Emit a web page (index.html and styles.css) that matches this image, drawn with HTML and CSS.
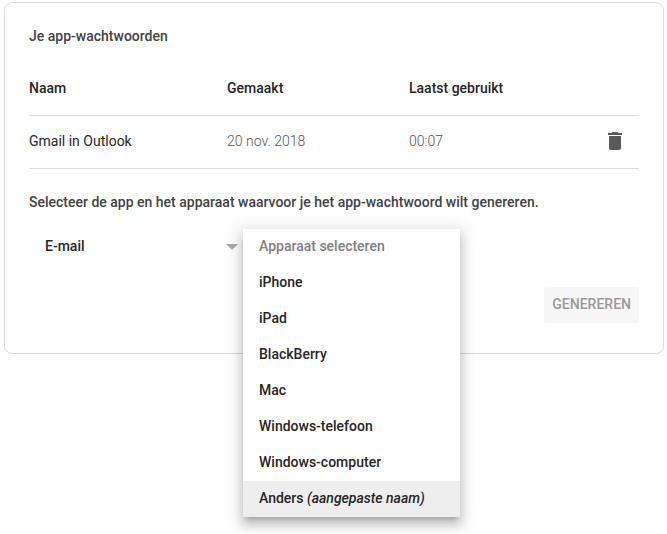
FILE: index.html
```html
<!DOCTYPE html>
<html lang="nl">
<head>
    <meta charset="UTF-8">
    <meta name="viewport" content="width=device-width, initial-scale=1.0">
    <title>App-wachtwoorden</title>
    <link rel="stylesheet" href="styles.css">
</head>
<body>
    <main class="card">
        <h1 class="card-title">Je app-wachtwoorden</h1>

        <table class="passwords">
            <thead>
                <tr>
                    <th class="col-name" scope="col">Naam</th>
                    <th class="col-created" scope="col">Gemaakt</th>
                    <th scope="col">Laatst gebruikt</th>
                    <td class="col-action"></td>
                </tr>
            </thead>
            <tbody>
                <tr>
                    <td>Gmail in Outlook</td>
                    <td class="muted">20 nov. 2018</td>
                    <td class="muted">00:07</td>
                    <td class="col-action">
                        <button class="delete" type="button" aria-label="Verwijderen">
                            <svg width="24" height="24" viewBox="0 0 24 24" fill="#5a5a5a" aria-hidden="true">
                                <path d="M6 19c0 1.100.900 2 2 2h8c1.100 0 2-.900 2-2V7H6v12zM19 4h-3.500l-1-1h-5l-1 1H5v2h14V4z"/>
                            </svg>
                        </button>
                    </td>
                </tr>
            </tbody>
        </table>

        <form class="generate">
            <p class="hint">Selecteer de app en het apparaat waarvoor je het app-wachtwoord wilt genereren.</p>
            <div class="pickers">
                <div class="app-picker">
                    <select class="app-select" aria-label="App selecteren">
                        <option>E-mail</option>
                    </select>
                    <svg class="arrow" width="12" height="6" viewBox="0 0 12 6" fill="#aaa" aria-hidden="true">
                        <path d="M0 0h12L6 6z"/>
                    </svg>
                </div>
                <div class="device-picker">
                    <div class="menu" role="listbox" aria-label="Apparaat selecteren">
                        <button class="menu-item placeholder" type="button" role="option">Apparaat selecteren</button>
                        <button class="menu-item" type="button" role="option">iPhone</button>
                        <button class="menu-item" type="button" role="option">iPad</button>
                        <button class="menu-item" type="button" role="option">BlackBerry</button>
                        <button class="menu-item" type="button" role="option">Mac</button>
                        <button class="menu-item" type="button" role="option">Windows-telefoon</button>
                        <button class="menu-item" type="button" role="option">Windows-computer</button>
                        <button class="menu-item active" type="button" role="option" aria-selected="true">Anders <em>(aangepaste naam)</em></button>
                    </div>
                </div>
            </div>
            <button class="submit" type="submit" disabled>GENEREREN</button>
        </form>
    </main>
</body>
</html>
```
FILE: styles.css
```css
* {
    box-sizing: border-box;
}

body {
    min-height: 100vh;
    margin: 0;
    padding: 2px 3px 0 4px;
    background: #fff;
    color: #262626;
    font-family: Roboto, "Liberation Sans", sans-serif;
    font-size: 14px;
    line-height: 20px;
}

button,
select {
    font: inherit;
    color: inherit;
    background: none;
    border: none;
    padding: 0;
}

.card {
    padding: 23px 24px 30px;
    border: 1px solid #dadce0;
    border-radius: 8px;
}

.card-title {
    margin: 0 0 16px;
    font-size: 14px;
    font-weight: 500;
    color: #424242;
}

/* table */
.passwords {
    width: 100%;
    border-collapse: collapse;
    table-layout: fixed;
}

.passwords th,
.passwords td {
    height: 53px;
    padding: 0 0 1px;
    border-bottom: 1px solid #dadce0;
    text-align: left;
    font-weight: 400;
}

.passwords th {
    font-weight: 500;
}

.passwords .muted {
    color: #555;
    font-weight: 300;
}

.col-name {
    width: 198px;
}

.col-created {
    width: 182px;
}

.col-action {
    width: 48px;
}

.delete {
    display: block;
    width: 48px;
    height: 24px;
    cursor: pointer;
}

.delete svg {
    display: block;
    margin: 0 auto;
}

/* generate form */
.generate {
    display: flex;
    flex-direction: column;
    margin-top: 23px;
}

.hint {
    margin: 0 0 17px;
    font-weight: 500;
    color: #424242;
}

.pickers {
    display: flex;
    font-weight: 500;
}

.app-picker {
    display: flex;
    align-items: center;
    width: 214px;
    height: 36px;
}

.app-select {
    appearance: none;
    flex: 1;
    height: 36px;
    padding: 0 0 2px 16px;
}

.arrow {
    margin-right: 5px;
}

.device-picker {
    position: relative;
    width: 217px;
}

.menu {
    position: absolute;
    top: 0;
    left: 0;
    width: 100%;
    background: #fff;
    box-shadow: 0 5px 5px -3px rgba(0, 0, 0, 0.2), 0 8px 10px 1px rgba(0, 0, 0, 0.14), 0 3px 14px 5px rgba(0, 0, 0, 0.1);
}

.menu-item {
    display: block;
    width: 100%;
    height: 36px;
    padding: 0 16px 2px;
    text-align: left;
    cursor: pointer;
}

.menu-item.placeholder {
    color: #808080;
}

.menu-item.active {
    background: #eee;
}

.submit {
    align-self: flex-end;
    height: 36px;
    margin-top: 22px;
    padding: 0 8px 2px;
    border-radius: 2px;
    background: #f7f7f7;
    color: #999;
    font-weight: 500;
}
```
